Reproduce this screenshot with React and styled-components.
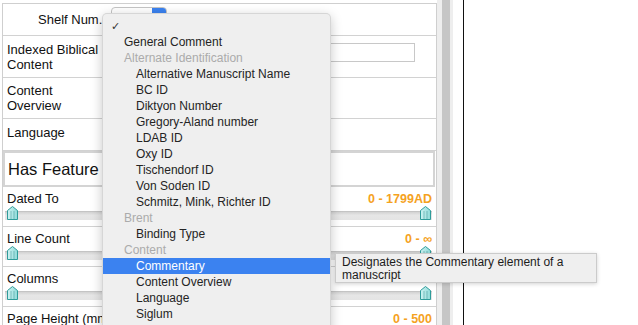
import React from "react"
import styled, { createGlobalStyle } from "styled-components"

const GlobalStyle = createGlobalStyle`
  html, body {
    margin: 0;
    padding: 0;
    background: #fff;
  }
  body {
    font-family: "Liberation Sans", Arial, sans-serif;
    color: #111;
  }
`

const Page = styled.div`
  position: relative;
  display: flex;
  width: 638px;
  height: 325px;
  overflow: hidden;
  background: #fff;
`

const Panel = styled.div`
  width: 433px;
  margin: 3px 0 0 2px;
  border-top: 1px solid #cfcfcf;
  border-left: 1px solid #cfcfcf;
  border-right: 1px solid #cfcfcf;
  display: flex;
  flex-direction: column;
  flex-shrink: 0;
  & > * {
    flex-shrink: 0;
  }
`

const Row = styled.div`
  display: flex;
  align-items: center;
  height: ${(p) => p.h}px;
  padding-bottom: ${(p) => p.pb || 0}px;
  border-bottom: 1px solid #d2d2d2;
  box-sizing: border-box;
  font-size: 13px;
  line-height: 15px;
`

const Label = styled.div`
  width: ${(p) => p.w || 100}px;
  padding-left: ${(p) => p.pl || 4}px;
  box-sizing: border-box;
  flex-shrink: 0;
`

const PopupButton = styled.div`
  display: flex;
  width: 54px;
  height: 18px;
  border: 1px solid #c4c4c4;
  border-radius: 4px;
  overflow: hidden;
  margin-top: -6px;
  &::after {
    content: "";
    margin-left: auto;
    width: 14px;
    background: #3b82f0;
  }
`

const TextInput = styled.div`
  margin-left: auto;
  margin-right: 21px;
  width: 300px;
  height: 17px;
  border: 1px solid #c8c8c8;
  margin-top: -9px;
`

const FeatureBox = styled.div`
  height: 36px;
  box-sizing: border-box;
  margin: 0 1px 0 0;
  border: 2px solid #d4d4d4;
  display: flex;
  align-items: center;
  padding-left: 3px;
  font-size: 16.5px;
`

const SliderRow = styled.div`
  height: 40px;
  box-sizing: border-box;
  border-bottom: 1px solid #d2d2d2;
  padding: 4px 4px 0 2px;
  display: flex;
  flex-direction: column;
`

const SliderHead = styled.div`
  display: flex;
  justify-content: space-between;
  align-items: center;
  font-size: 13px;
  line-height: 16px;
  padding-left: 2px;
`

const Range = styled.span`
  color: #f5a21e;
  font-weight: bold;
  font-size: 12.5px;
`

const Track = styled.div`
  position: relative;
  margin-top: 4px;
  height: 8px;
  background: linear-gradient(#d2d2d2, #e6e6e6 40%, #e4e4e4);
  border-top: 1px solid #c4c4c4;
`

const ThumbWrap = styled.div`
  position: absolute;
  top: -6px;
  ${(p) => (p.right ? "right: 1px;" : "left: 2px;")}
  width: 11px;
  height: 14px;
`

const Scrollbar = styled.div`
  width: 15px;
  flex-shrink: 0;
  background: #eeeeee;
  display: flex;
  justify-content: center;
  padding-left: 1px;
  &::before {
    content: "";
    width: 8px;
    background: #c6c6c6;
  }
`

const Divider = styled.div`
  width: 1px;
  margin-left: 10px;
  background: #111;
  flex-shrink: 0;
`

const Menu = styled.div`
  position: absolute;
  left: 102px;
  top: 13px;
  width: 229px;
  height: 340px;
  padding-top: 4px;
  background: #efefef;
  border: 1px solid rgba(0, 0, 0, 0.1);
  border-radius: 5px;
  box-shadow: 0 3px 12px rgba(0, 0, 0, 0.22);
  box-sizing: border-box;
  font-family: "Liberation Sans", Arial, sans-serif;
  font-size: 12px;
`

const MenuItem = styled.div`
  height: 16px;
  line-height: 16px;
  padding-left: ${(p) => (p.indent ? 33 : 21)}px;
  color: ${(p) => (p.header ? "#ababab" : p.active ? "#fff" : "#242424")};
  background: ${(p) => (p.active ? "#3b82f0" : "transparent")};
  white-space: nowrap;
`

const Check = styled.div`
  height: 16px;
  line-height: 16px;
  padding-left: 8px;
  font-size: 11px;
  color: #333;
`

const Tooltip = styled.div`
  position: absolute;
  left: 335px;
  top: 253px;
  width: 262px;
  height: 30px;
  box-sizing: border-box;
  padding: 2px 6px;
  background: #efefef;
  border: 1px solid #cbcbcb;
  box-shadow: 0 1px 4px rgba(0, 0, 0, 0.18);
  font-size: 12px;
  line-height: 13px;
  color: #1c1c1c;
`

const Thumb = ({ right }) => (
  <ThumbWrap right={right}>
    <svg width="11" height="14" viewBox="0 0 11 14">
      <defs>
        <linearGradient id="tg" x1="0" x2="1">
          <stop offset="0" stopColor="#cdf3f2" />
          <stop offset="1" stopColor="#8fdad8" />
        </linearGradient>
      </defs>
      <path d="M0.5 4.5 L5.5 0.5 L10.5 4.5 L10.5 13.5 L0.5 13.5 Z" fill="url(#tg)" stroke="#2e9c9a" />
      {[5.5, 7.5, 9.5, 11.5].map((y) => (
        <g key={y} fill="#3a8f8e">
          <rect x="3.5" y={y} width="1" height="1" />
          <rect x="6.5" y={y} width="1" height="1" />
        </g>
      ))}
    </svg>
  </ThumbWrap>
)

const sliders = [
  { label: "Dated To", range: "0 - 1799AD" },
  { label: "Line Count", range: "0 - ∞" },
  { label: "Columns", range: "0 - 20" },
  { label: "Page Height (mm)", range: "0 - 500" },
]

const menuItems = [
  { text: "General Comment" },
  { text: "Alternate Identification", header: true },
  { text: "Alternative Manuscript Name", indent: true },
  { text: "BC ID", indent: true },
  { text: "Diktyon Number", indent: true },
  { text: "Gregory-Aland number", indent: true },
  { text: "LDAB ID", indent: true },
  { text: "Oxy ID", indent: true },
  { text: "Tischendorf ID", indent: true },
  { text: "Von Soden ID", indent: true },
  { text: "Schmitz, Mink, Richter ID", indent: true },
  { text: "Brent", header: true },
  { text: "Binding Type", indent: true },
  { text: "Content", header: true },
  { text: "Commentary", indent: true, active: true },
  { text: "Content Overview", indent: true },
  { text: "Language", indent: true },
  { text: "Siglum", indent: true },
]

export default function App() {
  return (
    <Page>
      <GlobalStyle />
      <Panel>
        <Row h={32}>
          <Label w={108} pl={35}>Shelf Num..</Label>
          <PopupButton />
        </Row>
        <Row h={42}>
          <Label>Indexed Biblical<br />Content</Label>
          <TextInput />
        </Row>
        <Row h={41}>
          <Label>Content<br />Overview</Label>
        </Row>
        <Row h={32} pb={5}>
          <Label>Language</Label>
        </Row>
        <FeatureBox>Has Feature</FeatureBox>
        {sliders.map((s) => (
          <SliderRow key={s.label}>
            <SliderHead>
              <span>{s.label}</span>
              <Range>{s.range}</Range>
            </SliderHead>
            <Track>
              <Thumb />
              <Thumb right />
            </Track>
          </SliderRow>
        ))}
      </Panel>
      <Scrollbar />
      <Divider />

      <Menu>
        <Check>✓</Check>
        {menuItems.map((m) => (
          <MenuItem key={m.text} header={m.header} indent={m.indent} active={m.active}>
            {m.text}
          </MenuItem>
        ))}
      </Menu>
      <Tooltip>
        Designates the Commentary element of a
        <br />
        manuscript
      </Tooltip>
    </Page>
  )
}
